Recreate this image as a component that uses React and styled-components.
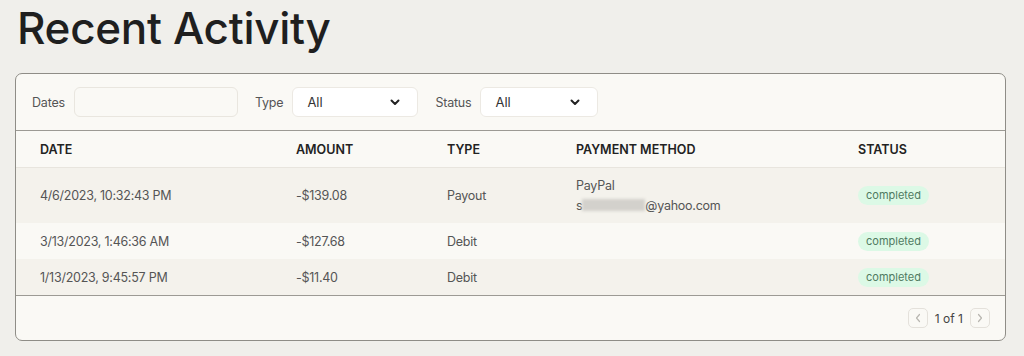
import styled, { createGlobalStyle } from "styled-components";

const rows = [
  {
    date: "4/6/2023, 10:32:43 PM",
    amount: "-$139.08",
    type: "Payout",
    method: "PayPal",
    account: ["s", "@yahoo.com"],
    status: "completed",
  },
  {
    date: "3/13/2023, 1:46:36 AM",
    amount: "-$127.68",
    type: "Debit",
    status: "completed",
  },
  {
    date: "1/13/2023, 9:45:57 PM",
    amount: "-$11.40",
    type: "Debit",
    status: "completed",
  },
];

const Chevron = () => (
  <svg width="12" height="12" viewBox="0 0 12 12" fill="none">
    <path d="M2.5 4.5L6 8l3.5-3.5" stroke="#222" strokeWidth="2" strokeLinecap="round" strokeLinejoin="round" />
  </svg>
);

const Arrow = ({ dir }) => (
  <svg width="8" height="10" viewBox="0 0 8 10" fill="none">
    <path
      d={dir === "left" ? "M5.5 1.5L2.5 5l3 3.5" : "M2.5 1.5L5.5 5l-3 3.5"}
      stroke="#b8b6b0"
      strokeWidth="1.2"
      strokeLinecap="round"
      strokeLinejoin="round"
    />
  </svg>
);

const App = () => (
  <>
    <GlobalStyle />
    <Page>
      <Title>Recent Activity</Title>
      <Panel>
        <FilterBar>
          <FilterLabel>Dates</FilterLabel>
          <DateInput />
          <FilterLabel>Type</FilterLabel>
          <Select $width={126}>
            All
            <Chevron />
          </Select>
          <FilterLabel>Status</FilterLabel>
          <Select $width={118}>
            All
            <Chevron />
          </Select>
        </FilterBar>
        <HeaderRow>
          <HeadCell>Date</HeadCell>
          <HeadCell>Amount</HeadCell>
          <HeadCell>Type</HeadCell>
          <HeadCell>Payment Method</HeadCell>
          <HeadCell>Status</HeadCell>
        </HeaderRow>
        {rows.map((row, i) => (
          <Row key={row.date} $tall={!!row.method} $shaded={i % 2 === 0}>
            <Cell>{row.date}</Cell>
            <Cell>{row.amount}</Cell>
            <Cell>{row.type}</Cell>
            <Cell>
              {row.method && (
                <MethodText>
                  <span>{row.method}</span>
                  <span>
                    {row.account[0]}
                    <Redacted />
                    {row.account[1]}
                  </span>
                </MethodText>
              )}
            </Cell>
            <Cell>
              <Badge>{row.status}</Badge>
            </Cell>
          </Row>
        ))}
        <Footer>
          <PageButton>
            <Arrow dir="left" />
          </PageButton>
          <PageText>1 of 1</PageText>
          <PageButton>
            <Arrow dir="right" />
          </PageButton>
        </Footer>
      </Panel>
    </Page>
  </>
);
export default App;

const GlobalStyle = createGlobalStyle`
  body {
    margin: 0;
    background: #f0efeb;
    font-family: Inter, "Liberation Sans", sans-serif;
  }
`;

const Page = styled.div`
  width: 1024px;
  height: 356px;
  padding: 0 18px 0 15px;
  box-sizing: border-box;
  overflow: hidden;
`;

const Title = styled.h1`
  margin: 0;
  padding: 0 0 0 2px;
  height: 73px;
  font-size: 44px;
  font-weight: 500;
  letter-spacing: -0.3px;
  line-height: 56px;
  color: #1f1f1f;
`;

const Panel = styled.div`
  border: 1.5px solid #8f8d87;
  border-radius: 7px;
  background: #faf9f5;
  overflow: hidden;
`;

const FilterBar = styled.div`
  display: flex;
  align-items: center;
  height: 56px;
  padding: 0 16px;
  border-bottom: 1.5px solid #9c9a94;
`;

const FilterLabel = styled.span`
  font-size: 12.5px;
  letter-spacing: -0.2px;
  color: #555;
  margin-right: 9px;
`;

const DateInput = styled.div`
  width: 162px;
  height: 28px;
  border: 1px solid #e9e6df;
  border-radius: 6px;
  background: #faf9f5;
  margin-right: 17px;
`;

const Select = styled.div`
  display: flex;
  align-items: center;
  justify-content: space-between;
  width: ${(p) => p.$width}px;
  height: 30px;
  box-sizing: border-box;
  padding: 0 16px 0 14px;
  background: #fff;
  border: 1px solid #ece9e3;
  border-radius: 6px;
  font-size: 13px;
  color: #333;
  margin-right: 17px;
`;

const Grid = styled.div`
  display: grid;
  grid-template-columns: 256px 151px 129px 282px 1fr;
  align-items: center;
  padding: 0 24px;
`;

const HeaderRow = styled(Grid)`
  height: 36px;
  border-bottom: 1px solid #e8e5de;
`;

const HeadCell = styled.div`
  font-size: 12.5px;
  font-weight: 600;
  text-transform: uppercase;
  color: #222;
`;

const Row = styled(Grid)`
  height: ${(p) => (p.$tall ? 55 : 36)}px;
  background: ${(p) => (p.$shaded ? "#f4f2ec" : "#faf9f5")};
`;

const Cell = styled.div`
  font-size: 12.5px;
  letter-spacing: -0.25px;
  color: #555;
`;

const MethodText = styled.div`
  display: flex;
  flex-direction: column;
  gap: 4px;
  line-height: 16px;
`;

const Redacted = styled.span`
  display: inline-block;
  width: 63px;
  height: 12px;
  vertical-align: -1px;
  background: #d3d1cc;
  filter: blur(1.5px);
`;

const Badge = styled.span`
  display: inline-block;
  padding: 2px 8px;
  border-radius: 10px;
  background: #dcf9e6;
  color: #4f7a61;
  font-size: 11px;
  letter-spacing: 0;
  line-height: 15px;
`;

const Footer = styled.div`
  display: flex;
  justify-content: flex-end;
  align-items: center;
  gap: 7px;
  height: 44px;
  padding: 0 15px;
  border-top: 1.5px solid #9c9a94;
`;

const PageButton = styled.div`
  display: flex;
  align-items: center;
  justify-content: center;
  width: 18px;
  height: 18px;
  border: 1px solid #e4e1db;
  border-radius: 5px;
`;

const PageText = styled.span`
  font-size: 12px;
  color: #444;
`;
